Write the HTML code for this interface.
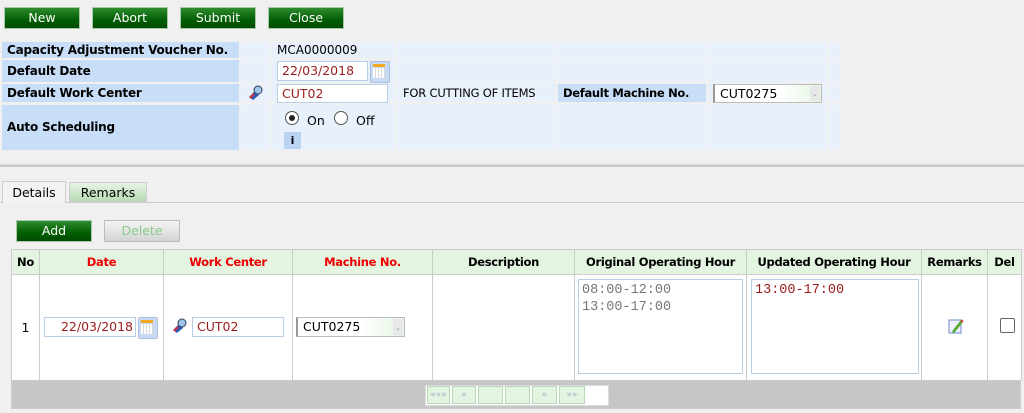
<!DOCTYPE html>
<html><head><style>
body{margin:0;width:1024px;height:413px;background:#f0f0f0;font-family:"DejaVu Sans","Liberation Sans",sans-serif;font-size:12px;position:relative;overflow:hidden}
.a{position:absolute;box-sizing:border-box;white-space:nowrap}
.btn{position:absolute;height:22px;width:76px;background:linear-gradient(#2e8b2e,#035e03 60%,#004a00);border:1px solid #a9c9a9;color:#fff;text-align:center;line-height:20px;font-size:12.5px;box-sizing:border-box}
.lab{background:#c7ddf8;font-weight:bold;font-size:12px;letter-spacing:-0.2px;padding-left:5px;color:#000;overflow:hidden}
.c{background:#e8f0fb}
.inp{background:#fff;border:1px solid #b8cde8;color:#9b1c1c;font-size:12.5px;padding-left:4px}
td{box-sizing:border-box;white-space:nowrap;border:1px solid #ccc;padding:0;overflow:hidden}
.h{background:#e3f4e1;font-weight:bold;font-size:11.5px;letter-spacing:-0.3px;text-align:center}
.r{color:#e00}
.cal{position:absolute;width:18px;height:20px;background:#c8daf2;border:1px solid #a9c0e3;border-radius:2px}
.cal:before{content:"";position:absolute;left:2px;top:2px;width:12px;height:3px;background:#f0a820}
.cal:after{content:"";position:absolute;left:2px;top:6px;width:12px;height:10px;background:repeating-linear-gradient(90deg,#fff 0 2px,#d8d8d8 2px 3px)}
.mono{font-family:"Liberation Mono",monospace;font-size:13.5px;line-height:17px}
.pg{position:absolute;top:0;height:18px;border:1px solid #b8d8b8;background:#e3f4e1;color:#aac;font-size:9px;text-align:center;line-height:16px;box-sizing:border-box}
</style></head><body>
<div class="btn" style="left:4px;top:7px">New</div>
<div class="btn" style="left:92px;top:7px">Abort</div>
<div class="btn" style="left:180px;top:7px">Submit</div>
<div class="btn" style="left:268px;top:7px">Close</div>

<div class="a lab" style="left:2px;top:42px;width:237px;height:16px;line-height:16px">Capacity Adjustment Voucher No.</div>
<div class="a lab" style="left:2px;top:60px;width:237px;height:22px;line-height:22px">Default Date</div>
<div class="a lab" style="left:2px;top:84px;width:237px;height:18px;line-height:18px">Default Work Center</div>
<div class="a lab" style="left:2px;top:105px;width:237px;height:45px;line-height:45px">Auto Scheduling</div>
<div class="a c" style="left:241px;top:42px;width:28px;height:16px"></div>
<div class="a c" style="left:241px;top:60px;width:28px;height:22px"></div>
<div class="a c" style="left:241px;top:84px;width:28px;height:18px"></div>
<div class="a c" style="left:241px;top:105px;width:28px;height:45px"></div>
<div class="a c" style="left:271px;top:42px;width:124px;height:16px;line-height:16px;padding-left:6px;font-size:12px">MCA0000009</div>
<div class="a c" style="left:271px;top:60px;width:124px;height:22px"></div>
<div class="a c" style="left:271px;top:84px;width:124px;height:18px"></div>
<div class="a c" style="left:271px;top:105px;width:124px;height:45px"></div>
<div class="a c" style="left:397px;top:42px;width:159px;height:16px"></div>
<div class="a c" style="left:397px;top:60px;width:159px;height:22px"></div>
<div class="a c" style="left:397px;top:84px;width:159px;height:18px;line-height:18px;padding-left:6px;font-size:11.5px;letter-spacing:-0.2px">FOR CUTTING OF ITEMS</div>
<div class="a c" style="left:397px;top:105px;width:159px;height:45px"></div>
<div class="a c" style="left:558px;top:42px;width:148px;height:16px"></div>
<div class="a c" style="left:558px;top:60px;width:148px;height:22px"></div>
<div class="a lab" style="left:558px;top:84px;width:148px;height:18px;line-height:18px;font-size:11.5px;letter-spacing:-0.3px;padding-left:5px">Default Machine No.</div>
<div class="a c" style="left:558px;top:105px;width:148px;height:45px"></div>
<div class="a c" style="left:708px;top:42px;width:119px;height:16px"></div>
<div class="a c" style="left:708px;top:60px;width:119px;height:22px"></div>
<div class="a c" style="left:708px;top:84px;width:119px;height:18px"></div>
<div class="a c" style="left:708px;top:105px;width:119px;height:45px"></div>
<div class="a c" style="left:829px;top:42px;width:10px;height:16px"></div>
<div class="a c" style="left:829px;top:60px;width:10px;height:22px"></div>
<div class="a c" style="left:829px;top:84px;width:10px;height:18px"></div>
<div class="a c" style="left:829px;top:105px;width:10px;height:45px"></div>

<div class="a inp" style="left:277px;top:61px;width:91px;height:20px;line-height:18px">22/03/2018</div>
<div class="cal" style="left:370px;top:61px"></div>
<svg class="a" style="left:247px;top:85px" width="17" height="16" viewBox="0 0 17 16"><path d="M2 12 L8 6 L12 10 L6 15Z" fill="#2a5ab8"/><path d="M3 13 L7 9" stroke="#d33" stroke-width="2"/><circle cx="11" cy="5" r="4" fill="#9ec4ea" stroke="#345" stroke-width="1"/></svg>
<div class="a inp" style="left:277px;top:84px;width:111px;height:19px;line-height:17px">CUT02</div>
<div class="a" style="left:713px;top:84px;width:109px;height:19px;background:linear-gradient(90deg,#fff,#fff 60%,#e4f6e4);border:1px solid #bbb;border-left:2px solid #999;font-size:12.5px;line-height:17px;padding-left:5px">CUT0275<span style="position:absolute;right:1px;top:1px;width:10px;height:15px;background:#e8e8e8;color:#999;font-size:7px;text-align:center">⌄</span></div>
<div class="a" style="left:285px;top:111px;width:14px;height:14px;border:1px solid #555;border-radius:50%;background:#fff"><div class="a" style="left:3px;top:3px;width:6px;height:6px;border-radius:50%;background:#222"></div></div>
<div class="a" style="left:307px;top:113px;font-size:12.5px">On</div>
<div class="a" style="left:334px;top:111px;width:14px;height:14px;border:1px solid #555;border-radius:50%;background:#fff"></div>
<div class="a" style="left:356px;top:113px;font-size:12.5px">Off</div>
<div class="a" style="left:284px;top:132px;width:17px;height:17px;background:#b9d3f3;text-align:center;font-weight:bold;font-size:11px;line-height:17px">i</div>

<div class="a" style="left:0;top:164px;width:1024px;height:3px;background:#c8c8c8;border-top:1px solid #ddd"></div>

<div class="a" style="left:0;top:202px;width:1024px;height:1px;background:#ccc"></div>
<div class="a" style="left:2px;top:181px;width:64px;height:22px;background:#f3f3f3;border:1px solid #ccc;border-bottom:none;text-align:center;line-height:22px;font-size:12.5px">Details</div>
<div class="a" style="left:69px;top:182px;width:78px;height:20px;background:linear-gradient(#e6f4e4,#b9dcb6);border:1px solid #ccc;text-align:center;line-height:20px;font-size:12.5px">Remarks</div>
<div class="btn" style="left:16px;top:220px">Add</div>
<div class="btn" style="left:104px;top:220px;background:linear-gradient(#f4f4f4,#d4d4d4);border-color:#bbb;color:#8c8"> Delete</div>

<div class="a" style="left:11px;top:249px;width:1010px;height:160px;background:#c6c6c6;border:1px solid #ccc"></div>
<table class="a" style="left:11px;top:249px;border-collapse:collapse;table-layout:fixed;width:1010px">
<colgroup><col style="width:28px"><col style="width:124px"><col style="width:129px"><col style="width:140px"><col style="width:142px"><col style="width:172px"><col style="width:175px"><col style="width:66px"><col style="width:34px"></colgroup>
<tr style="height:25px"><td class="h">No</td><td class="h r">Date</td><td class="h r">Work Center</td><td class="h r">Machine No.</td><td class="h">Description</td><td class="h">Original Operating Hour</td><td class="h">Updated Operating Hour</td><td class="h">Remarks</td><td class="h">Del</td></tr>
<tr style="height:106px;background:#fff"><td style="text-align:center;font-size:12.5px">1</td><td></td><td></td><td></td><td></td><td></td><td></td><td></td><td></td></tr>
</table>
<div class="a inp" style="left:44px;top:317px;width:92px;height:20px;line-height:18px;text-align:right;padding-right:2px">22/03/2018</div>
<div class="cal" style="left:138px;top:317px"></div>
<svg class="a" style="left:171px;top:318px" width="17" height="16" viewBox="0 0 17 16"><path d="M2 12 L8 6 L12 10 L6 15Z" fill="#2a5ab8"/><path d="M3 13 L7 9" stroke="#d33" stroke-width="2"/><circle cx="11" cy="5" r="4" fill="#9ec4ea" stroke="#345" stroke-width="1"/></svg>
<div class="a inp" style="left:192px;top:317px;width:92px;height:20px;line-height:18px">CUT02</div>
<div class="a" style="left:296px;top:317px;width:109px;height:20px;background:linear-gradient(90deg,#fff,#fff 60%,#e4f6e4);border:1px solid #bbb;border-left:2px solid #999;font-size:12.5px;line-height:18px;padding-left:5px">CUT0275<span style="position:absolute;right:1px;top:1px;width:10px;height:16px;background:#e8e8e8;color:#999;font-size:7px;text-align:center">⌄</span></div>
<div class="a mono" style="left:578px;top:279px;width:165px;height:95px;background:#fff;border:1px solid #b8cde8;padding:2px 3px;color:#777">08:00-12:00<br>13:00-17:00</div>
<div class="a mono" style="left:751px;top:279px;width:168px;height:95px;background:#fff;border:1px solid #b8cde8;padding:2px 3px;color:#9b1c1c">13:00-17:00</div>
<svg class="a" style="left:948px;top:318px" width="16" height="16" viewBox="0 0 16 16"><rect x="1" y="2" width="12" height="13" fill="#eef" stroke="#6a8ec8"/><path d="M5 12 L13 2 L15 4 L7 14 L4 15Z" fill="#5a3"/><path d="M13 2 L15 4" stroke="#d44" stroke-width="2"/></svg>
<div class="a" style="left:1000px;top:318px;width:15px;height:15px;border:1px solid #666;border-radius:2px;background:#fff"></div>
<div class="a" style="left:425px;top:385px;width:184px;height:21px;background:#fff;border:1px solid #ddd">
<div class="pg" style="left:1px;width:23px">«««</div><div class="pg" style="left:26px;width:24px">«</div><div class="pg" style="left:52px;width:25px"></div><div class="pg" style="left:79px;width:25px"></div><div class="pg" style="left:106px;width:25px">»</div><div class="pg" style="left:133px;width:26px">»»</div>
</div>
</body></html>
